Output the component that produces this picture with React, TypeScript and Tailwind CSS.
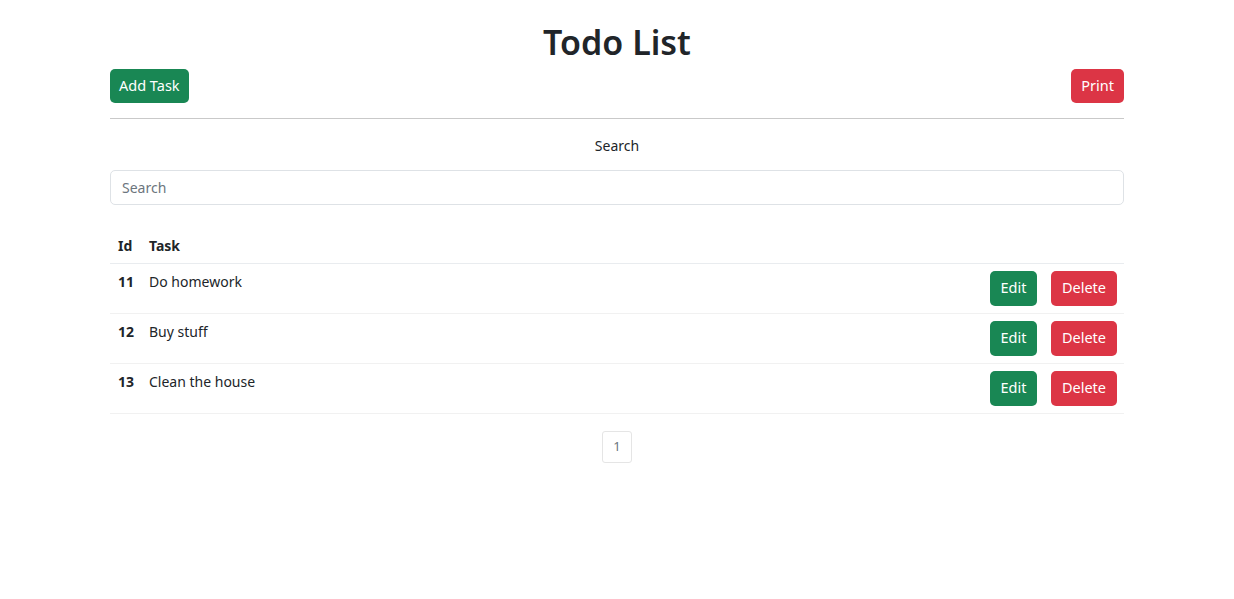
import React, { useState } from 'react';

type Task = { id: number; name: string };

const TASKS: Task[] = [
  { id: 11, name: 'Do homework' },
  { id: 12, name: 'Buy stuff' },
  { id: 13, name: 'Clean the house' },
];

export default function App() {
  const [query, setQuery] = useState('');
  const shown = TASKS.filter((t) => t.name.toLowerCase().includes(query.toLowerCase()));

  return (
    <div className="min-h-screen bg-white text-[#212529] font-['Noto_Sans',sans-serif]">
      <div className="mx-auto w-[1014px] pt-[22px]">
        <h1 className="text-center text-[34px] font-semibold leading-[1.2]">Todo List</h1>

        <div className="mt-[6px] flex items-center justify-between">
          <button className="h-[34px] rounded-[5px] bg-[#198754] px-[9px] text-[14.5px] text-white">
            Add Task
          </button>
          <button className="h-[34px] rounded-[5px] bg-[#dc3545] px-[10px] text-[14.5px] text-white">
            Print
          </button>
        </div>

        <hr className="mt-[15px] border-t border-[#c9c9c9]" />

        <p className="mt-[17px] text-center text-[14px] leading-[20px]">Search</p>

        <input
          value={query}
          onChange={(e) => setQuery(e.target.value)}
          placeholder="Search"
          className="mt-[14px] h-[35px] w-full rounded-[5px] border border-[#dee2e6] px-[11px] text-[14px] outline-none placeholder:text-[#6c757d]"
        />

        <table className="mt-[23px] w-full border-collapse text-[14px]">
          <thead>
            <tr className="border-b border-[#e9ecef]">
              <th className="w-[31px] py-[8px] pl-[8px] text-left font-bold leading-[19px]">Id</th>
              <th className="py-[8px] pl-[8px] text-left font-bold leading-[19px]">Task</th>
              <th />
            </tr>
          </thead>
          <tbody>
            {shown.map((t) => (
              <tr key={t.id} className="border-b border-[#f1f1f1]">
                <td className="pb-[7px] pt-[8px] pl-[8px] align-top font-bold leading-[20px]">{t.id}</td>
                <td className="pb-[7px] pt-[8px] pl-[8px] align-top leading-[20px]">{t.name}</td>
                <td className="pb-[7px] pt-[7px] pr-[7px]">
                  <div className="flex justify-end gap-[14px]">
                    <button className="h-[35px] w-[47px] rounded-[5px] bg-[#198754] text-[14.5px] text-white">
                      Edit
                    </button>
                    <button className="h-[35px] w-[66px] rounded-[5px] bg-[#dc3545] text-[14.5px] text-white">
                      Delete
                    </button>
                  </div>
                </td>
              </tr>
            ))}
          </tbody>
        </table>

        <div className="mt-[17px] flex justify-center">
          <button className="h-[32px] w-[30px] rounded-[3px] border border-[#e5e5e5] text-[13px] text-[#6c757d]">
            1
          </button>
        </div>
      </div>
    </div>
  );
}
